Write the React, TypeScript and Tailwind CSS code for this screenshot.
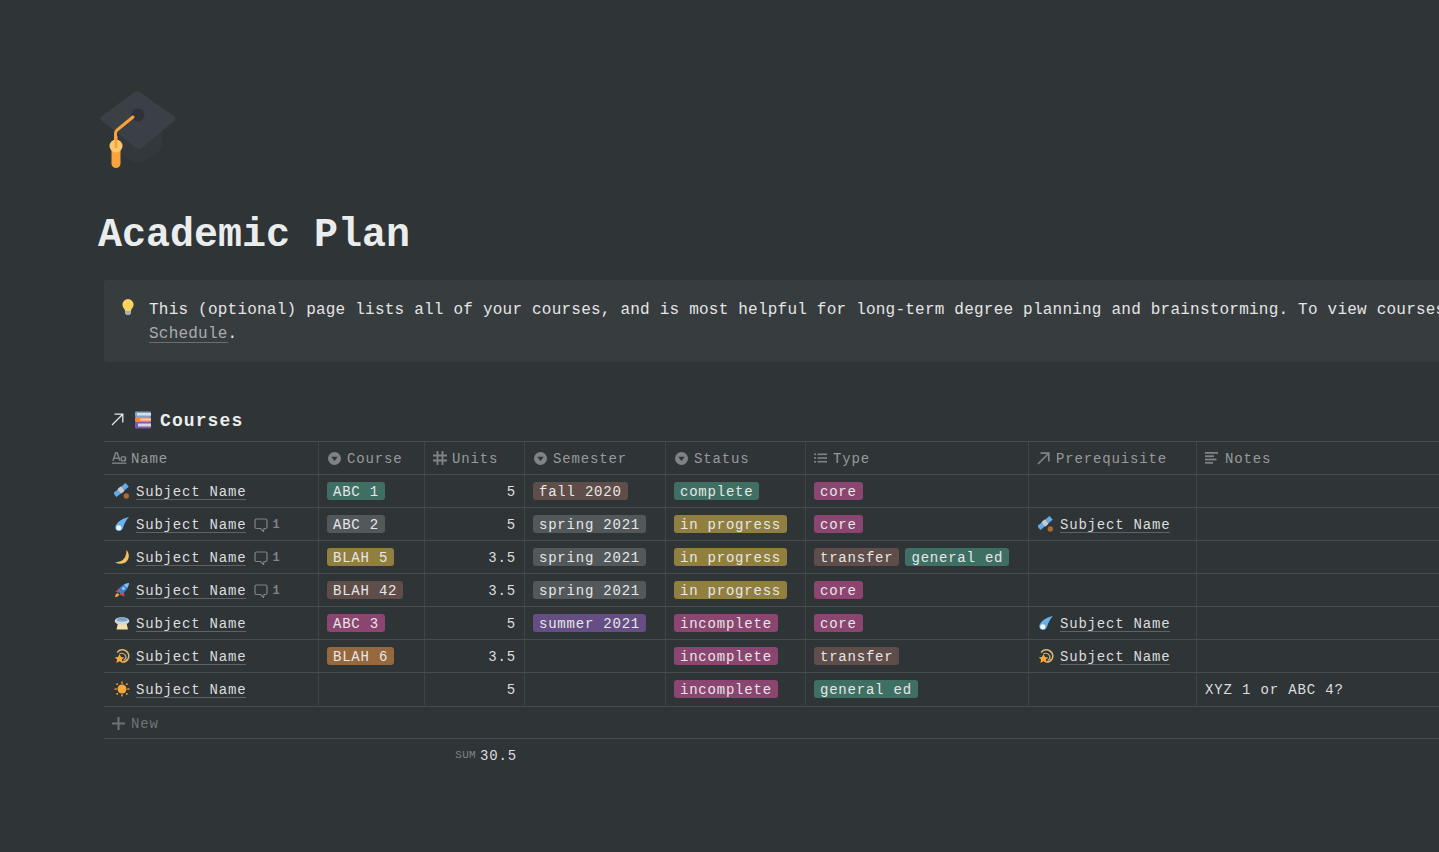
import React from "react";

const mono = { fontFamily: '"Liberation Mono", monospace' };

const tagColors: Record<string, string> = {
  green: "bg-[#3f6f63]",
  gray: "bg-[#53585b]",
  yellow: "bg-[#917f40]",
  brown: "bg-[#5e4d49]",
  pink: "bg-[#8a4570]",
  orange: "bg-[#96683d]",
  purple: "bg-[#654e84]",
};

const Satellite = () => (
  <svg viewBox="0 0 16 16" className="w-4 h-4 shrink-0">
    <g transform="rotate(-40 7 7)">
      <rect x="-1" y="4.500" width="5.500" height="5" fill="#62ade8" />
      <rect x="9.500" y="4.500" width="5.500" height="5" fill="#62ade8" />
      <rect x="4.500" y="4" width="5" height="6" rx="1" fill="#c3ccd2" />
    </g>
    <circle cx="12.300" cy="13" r="2.700" fill="#a66d2f" />
  </svg>
);

const Comet = () => (
  <svg viewBox="0 0 16 16" className="w-4 h-4 shrink-0">
    <path d="M15 1C10 2 4.500 4.500 2 9c-1.500 3 0 6 3 6 2.500 0 3.800-1.800 4.300-4C10 8 12 4.500 15 1z" fill="#69b1ea" />
    <circle cx="4.800" cy="11.800" r="2.500" fill="#f2f8fd" />
  </svg>
);

const Moon = () => (
  <svg viewBox="0 0 16 16" className="w-4 h-4 shrink-0">
    <path d="M12.500 1c3 3.500 3 8 .5 11-2.500 3-7.500 3.500-12 1.500 4-.5 7.500-1.500 9.500-4.500 1.500-2.300 2-5 2-8z" fill="#f3c363" />
  </svg>
);

const Rocket = () => (
  <svg viewBox="0 0 16 16" className="w-4 h-4 shrink-0">
    <path d="M1.500 9.500 6 5.500 4.500 11z" fill="#d8443a" />
    <path d="M10.500 14.500l-.5-5-5 3z" fill="#d8443a" />
    <path d="M15 1C10 1.500 6 4.500 3.800 9l3.200 3.200C11.500 10 14.500 6 15 1z" fill="#3f80cf" />
    <path d="M15 1c-2 .3-3.500 1-5 2l3 3c1-1.500 1.700-3 2-5z" fill="#8bbcec" />
    <circle cx="9.500" cy="6.500" r="1.300" fill="#c4dcf2" />
    <path d="M3.500 11C2 11.800 1 13.500 1 15.300c1.800 0 3.500-1 4.300-2.500z" fill="#f5a63a" />
  </svg>
);

const Saucer = () => (
  <svg viewBox="0 0 16 16" className="w-4 h-4 shrink-0">
    <path d="M4 8h8.500l1.500 6.500H2.500z" fill="#f5dfa8" />
    <ellipse cx="8" cy="6" rx="7.300" ry="3.800" fill="#cfd8de" />
    <path d="M2.500 5.500C3.500 3 6 2 8 2c3 0 5 1.200 5.800 3.500-3 1.300-8.500 1.300-11.300 0z" fill="#7ba6c9" />
  </svg>
);

const Dizzy = () => (
  <svg viewBox="0 0 16 16" className="w-4 h-4 shrink-0">
    <path d="M3.500 4C5.500 1.800 9 1.300 12 3c3 1.800 3.500 5.500 2 8-1.200 2-3.500 3-5.500 3" fill="none" stroke="#dcb676" strokeWidth="1.500" strokeLinecap="round" />
    <path d="M6 5.500c2-.5 4.500.2 5.500 2 .9 1.800.2 3.500-1.500 4.500" fill="none" stroke="#dcb676" strokeWidth="1.200" strokeLinecap="round" />
    <path d="M5.500 6l1.600 3 3.200.4-2.400 2.200.7 3.300-3.100-1.700-3.100 1.700.7-3.300-2.400-2.200 3.200-.4z" fill="#f6a93a" />
  </svg>
);

const Sun = () => (
  <svg viewBox="0 0 16 16" className="w-4 h-4 shrink-0">
    <circle cx="8" cy="8" r="4.500" fill="#f7a93c" />
    <g fill="#e79a34">
      <rect x="7.200" y="0.500" width="1.600" height="2.300" rx="0.500" />
      <rect x="7.200" y="13.200" width="1.600" height="2.300" rx="0.500" />
      <rect x="0.500" y="7.200" width="2.300" height="1.600" rx="0.500" />
      <rect x="13.200" y="7.200" width="2.300" height="1.600" rx="0.500" />
      <rect x="2.300" y="2.300" width="1.800" height="1.800" rx="0.500" />
      <rect x="11.900" y="2.300" width="1.800" height="1.800" rx="0.500" />
      <rect x="2.300" y="11.900" width="1.800" height="1.800" rx="0.500" />
      <rect x="11.900" y="11.900" width="1.800" height="1.800" rx="0.500" />
    </g>
  </svg>
);

const Books = () => (
  <svg viewBox="0 0 18 18" className="w-[18px] h-[18px] shrink-0">
    <rect x="1" y="0.500" width="16" height="5.500" rx="1" fill="#7ea3c2" />
    <rect x="3" y="2" width="14" height="2.500" fill="#d7dfe3" />
    <rect x="1" y="6" width="16" height="5" rx="1" fill="#ef8a2e" />
    <rect x="6" y="7.500" width="11" height="2" fill="#e9d3b4" />
    <rect x="1" y="11" width="16" height="6.500" rx="1" fill="#7a5aa6" />
    <rect x="4" y="12.500" width="13" height="3" fill="#d6d3e3" />
  </svg>
);

const Bulb = () => (
  <svg viewBox="0 0 16 18" className="w-4 h-[18px] shrink-0">
    <path d="M8 1a5.600 5.600 0 0 0-5.600 5.600c0 2.300 1.400 3.500 2.200 5 .3.500.4 1 .4 1.400h6c0-.4.100-.9.400-1.400.8-1.500 2.200-2.700 2.200-5A5.600 5.600 0 0 0 8 1z" fill="#fbd25f" />
    <path d="M5 13h6v2.500l-1.500 1.500h-3L5 15.500z" fill="#a6aeb4" />
  </svg>
);

const Cap = () => (
  <svg viewBox="0 0 78 78" className="w-[78px] h-[78px] block">
    <path d="M16 40v18c0 3 17 15 23 15 6 0 24-12 24-17V40z" fill="#33383d" />
    <path d="M3 26 34 3c3-2 5-2 8 0l33 23c2 2 2 3 0 5L44 57c-3 2-5 2-8 0L3 31c-2-2-2-3 0-5z" fill="#3b4047" />
    <circle cx="39" cy="25" r="6.500" fill="#2e3238" />
    <path d="M34 27 18 40c-1 1-1.500 2-1.500 3.500V56" fill="none" stroke="#f9a33a" strokeWidth="3" strokeLinecap="round" />
    <rect x="12.500" y="56" width="9" height="22" rx="4.500" fill="#f9a33a" />
    <circle cx="17" cy="56" r="6.500" fill="#fdc770" />
    <rect x="15.500" y="46" width="3" height="12" fill="#f9a33a" />
  </svg>
);

// small property icons used in the header row
const TitleGlyph = () => (
  <svg viewBox="0 0 16 14" className="w-[15px] h-[14px] shrink-0" fill="none">
    <path d="M1 10 4 1.500h1.500L8.500 10M2.300 7.300h4.900" stroke="#7f8386" strokeWidth="1.600" />
    <circle cx="12" cy="7.800" r="2.300" stroke="#7f8386" strokeWidth="1.500" />
    <path d="M14.500 5.500V10.300" stroke="#7f8386" strokeWidth="1.400" />
    <path d="M0 12.500h15.500" stroke="#7f8386" strokeWidth="1.500" />
  </svg>
);

const SelectGlyph = () => (
  <svg viewBox="0 0 14 14" className="w-[13px] h-[13px] shrink-0 ml-[1px]">
    <circle cx="7" cy="7" r="7" fill="#7f8386" />
    <path d="M3.500 5.200h7L7 9.800z" fill="#2f3437" />
  </svg>
);

const NumberGlyph = () => (
  <svg viewBox="0 0 14 14" className="w-[14px] h-[14px] shrink-0" fill="none" stroke="#7f8386" strokeWidth="1.800">
    <path d="M4.500 0v14M9.500 0v14M0 4.500h14M0 9.500h14" />
  </svg>
);

const ListGlyph = () => (
  <svg viewBox="0 0 13 10" className="w-[13px] h-[10px] shrink-0" fill="#7f8386">
    <rect x="0" y="0.500" width="2" height="1.600" />
    <rect x="3.500" y="0.500" width="9.500" height="1.600" />
    <rect x="0" y="4.200" width="2" height="1.600" />
    <rect x="3.500" y="4.200" width="9.500" height="1.600" />
    <rect x="0" y="7.900" width="2" height="1.600" />
    <rect x="3.500" y="7.900" width="9.500" height="1.600" />
  </svg>
);

const ArrowGlyph = ({ color = "#7f8386", width = 1.7 }: { color?: string; width?: number }) => (
  <svg viewBox="0 0 13 13" className="w-[13px] h-[13px] shrink-0" fill="none" stroke={color} strokeWidth={width}>
    <path d="M1 12 11.500 1.500M3.500 1.200h8.300v8.300" />
  </svg>
);

const NotesGlyph = () => (
  <svg viewBox="0 0 14 12" className="w-[14px] h-[12px] shrink-0" fill="#7f8386">
    <rect x="0" y="0" width="13" height="1.800" />
    <rect x="0" y="3.300" width="9" height="1.800" />
    <rect x="0" y="6.600" width="11.500" height="1.800" />
    <rect x="0" y="9.900" width="8" height="1.800" />
  </svg>
);

const Tag = ({ label, color }: { label: string; color: string }) => (
  <span className={`inline-block h-[18px] leading-[20px] px-[6px] rounded-[3px] text-[14px] tracking-[0.78px] whitespace-nowrap text-[#e6e7e7] ${tagColors[color]}`}>
    {label}
  </span>
);

const SubjectLink = ({ icon }: { icon: React.ReactNode }) => (
  <span className="flex items-center gap-[6px]">
    {icon}
    <span className="inline-block h-[18px] border-b border-[#5f6366] text-[14px] leading-[21px] tracking-[0.8px] text-[#dcdddd] whitespace-nowrap">
      Subject Name
    </span>
  </span>
);

const Comment = () => (
  <span className="flex items-center gap-[4px] ml-[8px] text-[#7f8386]">
    <svg viewBox="0 0 14 14" className="w-[14px] h-[14px] mt-[1px]" fill="none" stroke="#7f8386" strokeWidth="1.200">
      <path d="M2.500 1h9A1.500 1.500 0 0 1 13 2.500v6.500A1.500 1.500 0 0 1 11.500 10.500H10l-.5 3-3-3H2.500A1.500 1.500 0 0 1 1 9V2.500A1.500 1.500 0 0 1 2.500 1z" />
    </svg>
    <span className="text-[12px] font-bold leading-none pt-[2px]">1</span>
  </span>
);

const columns = [
  { label: "Name", w: "w-[215px]", icon: <TitleGlyph />, gap: "gap-[4px]" },
  { label: "Course", w: "w-[106px]", icon: <SelectGlyph />, gap: "gap-[6px]" },
  { label: "Units", w: "w-[100px]", icon: <NumberGlyph />, gap: "gap-[5px]" },
  { label: "Semester", w: "w-[141px]", icon: <SelectGlyph />, gap: "gap-[6px]" },
  { label: "Status", w: "w-[140px]", icon: <SelectGlyph />, gap: "gap-[6px]" },
  { label: "Type", w: "w-[223px]", icon: <ListGlyph />, gap: "gap-[6px]" },
  { label: "Prerequisite", w: "w-[168px]", icon: <ArrowGlyph />, gap: "gap-[6px]" },
  { label: "Notes", w: "w-[300px]", icon: <NotesGlyph />, gap: "gap-[6px]" },
];

type Row = {
  icon: React.ReactNode;
  comment?: boolean;
  course?: [string, string];
  units: string;
  semester?: [string, string];
  status: [string, string];
  types: [string, string][];
  prereq?: React.ReactNode;
  notes?: string;
};

const rows: Row[] = [
  { icon: <Satellite />, course: ["ABC 1", "green"], units: "5", semester: ["fall 2020", "brown"], status: ["complete", "green"], types: [["core", "pink"]] },
  { icon: <Comet />, comment: true, course: ["ABC 2", "gray"], units: "5", semester: ["spring 2021", "gray"], status: ["in progress", "yellow"], types: [["core", "pink"]], prereq: <Satellite /> },
  { icon: <Moon />, comment: true, course: ["BLAH 5", "yellow"], units: "3.5", semester: ["spring 2021", "gray"], status: ["in progress", "yellow"], types: [["transfer", "brown"], ["general ed", "green"]] },
  { icon: <Rocket />, comment: true, course: ["BLAH 42", "brown"], units: "3.5", semester: ["spring 2021", "gray"], status: ["in progress", "yellow"], types: [["core", "pink"]] },
  { icon: <Saucer />, course: ["ABC 3", "pink"], units: "5", semester: ["summer 2021", "purple"], status: ["incomplete", "pink"], types: [["core", "pink"]], prereq: <Comet /> },
  { icon: <Dizzy />, course: ["BLAH 6", "orange"], units: "3.5", status: ["incomplete", "pink"], types: [["transfer", "brown"]], prereq: <Dizzy /> },
  { icon: <Sun />, units: "5", status: ["incomplete", "pink"], types: [["general ed", "green"]], notes: "XYZ 1 or ABC 4?" },
];

const cell = "h-full shrink-0 flex items-center border-r border-[#3f4447] px-2";

export default function App() {
  return (
    <div className="h-[852px] w-[1439px] overflow-hidden bg-[#2f3437] text-[#ebecec]" style={mono}>
      <div className="pl-[99px] pt-[90px]">
        <Cap />
      </div>
      <h1 className="pl-[98px] mt-[42px] text-[40px] leading-[52px] font-bold text-[#ebecec]">Academic Plan</h1>

      <div className="ml-[104px] mt-[18px] w-[1335px] h-[82px] bg-[#373c3f] rounded-l-[3px] flex pl-[16px] pt-[18px] gap-[13px] overflow-hidden">
        <Bulb />
        <div className="text-[16px] leading-[24px] tracking-[0.22px] text-[#e4e5e5]">
          <p className="whitespace-nowrap">
            This (optional) page lists all of your courses, and is most helpful for long-term degree planning and brainstorming. To view courses
          </p>
          <p>
            <span className="inline-block h-[21px] text-[#a9abad] border-b border-[#6a6e71]">Schedule</span>.
          </p>
        </div>
      </div>

      <div className="ml-[104px] mt-[39px] h-[40px] flex items-center pl-[7px] pt-[1px]">
        <span className="-mt-[4px]">
          <ArrowGlyph color="#e6e7e7" width={1.3} />
        </span>
        <span className="ml-[10px] -mt-[3px]">
          <Books />
        </span>
        <span className="ml-[8px] text-[18px] font-bold tracking-[1.1px]">Courses</span>
      </div>

      <div className="ml-[104px] w-[1335px] overflow-hidden">
        <div className="h-[34px] flex border-y border-[#484c50] w-[1500px]">
          {columns.map((col) => (
            <div key={col.label} className={`${cell} ${col.w} ${col.gap} text-[14px] tracking-[0.85px] text-[#979a9b]`}>
              {col.icon}
              <span className="pt-[2px]">{col.label}</span>
            </div>
          ))}
        </div>
        {rows.map((row, i) => (
          <div key={i} className={`flex w-[1500px] border-b border-[#484c50] ${i === 6 ? "h-[34px] pb-[1px]" : "h-[33px]"}`}>
            <div className={`${cell} w-[215px]`}>
              <span className="pl-[2px] flex items-center">
                <SubjectLink icon={row.icon} />
                {row.comment && <Comment />}
              </span>
            </div>
            <div className={`${cell} w-[106px]`}>{row.course && <Tag label={row.course[0]} color={row.course[1]} />}</div>
            <div className={`${cell} w-[100px] justify-end pt-[2px] text-[14px] tracking-[0.85px] text-[#dcdddd]`}>{row.units}</div>
            <div className={`${cell} w-[141px]`}>{row.semester && <Tag label={row.semester[0]} color={row.semester[1]} />}</div>
            <div className={`${cell} w-[140px]`}>
              <Tag label={row.status[0]} color={row.status[1]} />
            </div>
            <div className={`${cell} w-[223px] gap-[6px]`}>
              {row.types.map((t) => (
                <Tag key={t[0]} label={t[0]} color={t[1]} />
              ))}
            </div>
            <div className={`${cell} w-[168px]`}>
              {row.prereq && (
                <span className="ml-[1px]">
                  <SubjectLink icon={row.prereq} />
                </span>
              )}
            </div>
            <div className="h-full flex items-center px-2 pt-[2px] text-[14px] tracking-[0.85px] text-[#dcdddd]">{row.notes}</div>
          </div>
        ))}
        <div className="h-[32px] flex items-center pl-[8px] gap-[6px] border-b border-[#484c50] text-[14px] tracking-[0.85px] text-[#6f7376]">
          <svg viewBox="0 0 13 13" className="w-[13px] h-[13px] mt-[1px]" fill="#6f7376">
            <rect x="5.500" y="0" width="2" height="13" />
            <rect x="0" y="5.500" width="13" height="2" />
          </svg>
          <span className="pt-[3px]">New</span>
        </div>
        <div className="flex h-[33px] items-center">
          <div className="w-[421px] shrink-0 flex items-center justify-end pr-[8px] gap-[4px]">
            <span className="text-[11px] text-[#7f8386] tracking-[0.3px]">SUM</span>
            <span className="text-[14px] tracking-[0.85px] text-[#dcdddd] leading-none">30.5</span>
          </div>
        </div>
      </div>
    </div>
  );
}
